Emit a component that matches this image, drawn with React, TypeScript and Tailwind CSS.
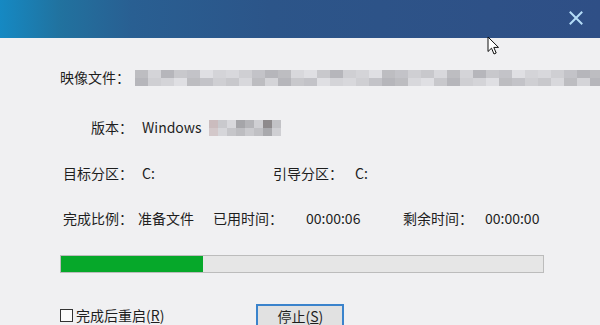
const cellColors = [
  "bg-[#d4d4d8]",
  "bg-[#c8c8cc]",
  "bg-[#bdbdc1]",
  "bg-[#cfcfd3]",
  "bg-[#dfdfe3]",
  "bg-[#b6b6bb]",
  "bg-[#d8d8dc]",
  "bg-[#c3c3c8]",
];

function Mosaic({ cols, cell, seed }: { cols: number; cell: string; seed: number }) {
  const rows = [0, 1];
  return (
    <div className="flex flex-col">
      {rows.map((r) => (
        <div key={r} className="flex">
          {Array.from({ length: cols }).map((_, i) => (
            <div
              key={i}
              className={`${cell} h-[8px] ${cellColors[(i * 5 + r * 3 + seed + ((i * i) % 3)) % cellColors.length]}`}
            />
          ))}
        </div>
      ))}
    </div>
  );
}

function VersionMosaic() {
  const top = ["bg-[#cbbcbe]", "bg-[#c9c9cd]", "bg-[#d8d8dc]", "bg-[#a5a5a9]", "bg-[#b4b4b8]", "bg-[#cfcfd3]", "bg-[#8e8a8c]", "bg-[#c2c2c6]"];
  const bot = ["bg-[#d3c8ca]", "bg-[#d6d6da]", "bg-[#c6c6ca]", "bg-[#bdbdc1]", "bg-[#cacace]", "bg-[#c0c0c4]", "bg-[#a9a9ad]", "bg-[#cfcfd3]"];
  return (
    <div className="flex flex-col">
      <div className="flex">
        {top.map((c, i) => (
          <div key={i} className={`w-[9px] h-[8px] ${c}`} />
        ))}
      </div>
      <div className="flex">
        {bot.map((c, i) => (
          <div key={i} className={`w-[9px] h-[8px] ${c}`} />
        ))}
      </div>
    </div>
  );
}

export default function App() {
  return (
    <div className="relative w-[600px] h-[325px] overflow-hidden bg-[#f0f0f2] text-[14px] text-[#1e1e1e] font-['Microsoft_YaHei','Noto_Sans_CJK_SC','Noto_Sans',sans-serif]">
      {/* title bar */}
      <div className="h-[38px] flex items-center justify-end pr-[17px] bg-[linear-gradient(90deg,#1589c3_0%,#21729f_10%,#295f92_22%,#2c5589_45%,#2f4f86_100%)]">
        <svg width="14" height="14" viewBox="0 0 14 14" className="mb-[3px]">
          <path d="M1.5 1.5 L12.5 12.5 M12.5 1.5 L1.5 12.5" stroke="#b4dcf7" strokeWidth="2" strokeLinecap="square" />
        </svg>
      </div>

      <div className="flex flex-col pl-[60px]">
        {/* image file */}
        <div className="mt-[29px] h-[20px] flex items-center">
          <span className="w-[73px] text-right whitespace-nowrap">映像文件：</span>
          <div className="ml-[5px] mt-[1px]">
            <Mosaic cols={36} cell="w-[13px]" seed={2} />
          </div>
        </div>

        {/* version */}
        <div className="mt-[30px] h-[20px] flex items-center">
          <span className="w-[73px] text-right whitespace-nowrap">版本：</span>
          <span className="ml-[9px]">Windows</span>
          <div className="ml-[7px] mt-[1px]">
            <VersionMosaic />
          </div>
        </div>

        {/* partitions */}
        <div className="mt-[26px] h-[20px] flex items-center whitespace-nowrap">
          <span className="w-[73px] text-right">目标分区：</span>
          <span className="w-[140px] pl-[9px]">C:</span>
          <span className="w-[82px]">引导分区：</span>
          <span>C:</span>
        </div>

        {/* progress info */}
        <div className="mt-[25px] h-[20px] flex items-center whitespace-nowrap">
          <span className="w-[73px] text-right">完成比例：</span>
          <span className="w-[80px] pl-[5px]">准备文件</span>
          <span className="w-[93px]">已用时间：</span>
          <span className="w-[97px]">00:00:06</span>
          <span className="w-[82px]">剩余时间：</span>
          <span>00:00:00</span>
        </div>

        {/* progress bar */}
        <div className="mt-[27px] w-[484px] h-[18px] border border-[#bcbcbc] bg-[#e6e6e6] flex">
          <div className="w-[142px] h-full bg-[#06a82a]" />
        </div>

        {/* bottom row */}
        <div className="mt-[31px] flex items-start whitespace-nowrap">
          <div className="mt-[1px] h-[20px] flex items-center">
            <div className="w-[13px] h-[13px] border border-[#333] bg-[#fbfbfb]" />
            <span className="ml-[3px] leading-[20px]">
              完成后重启(<span className="underline">R</span>)
            </span>
          </div>
          <div className="ml-[92px] w-[84px] h-[24px] box-content border-2 border-b-0 border-[#3a83cc] bg-[#e1e1e1] flex items-start justify-center leading-[20px]">
            停止(<span className="underline">S</span>)
          </div>
        </div>
      </div>

      {/* mouse pointer */}
      <svg className="absolute left-[487px] top-[36px]" width="14" height="20" viewBox="0 0 14 20">
        <path
          d="M1 1 L1 15.5 L4.5 12.2 L7 18 L9.2 17 L6.8 11.4 L11.5 11.4 Z"
          fill="#ffffff"
          stroke="#111"
          strokeWidth="1"
          strokeLinejoin="miter"
        />
      </svg>
    </div>
  );
}
